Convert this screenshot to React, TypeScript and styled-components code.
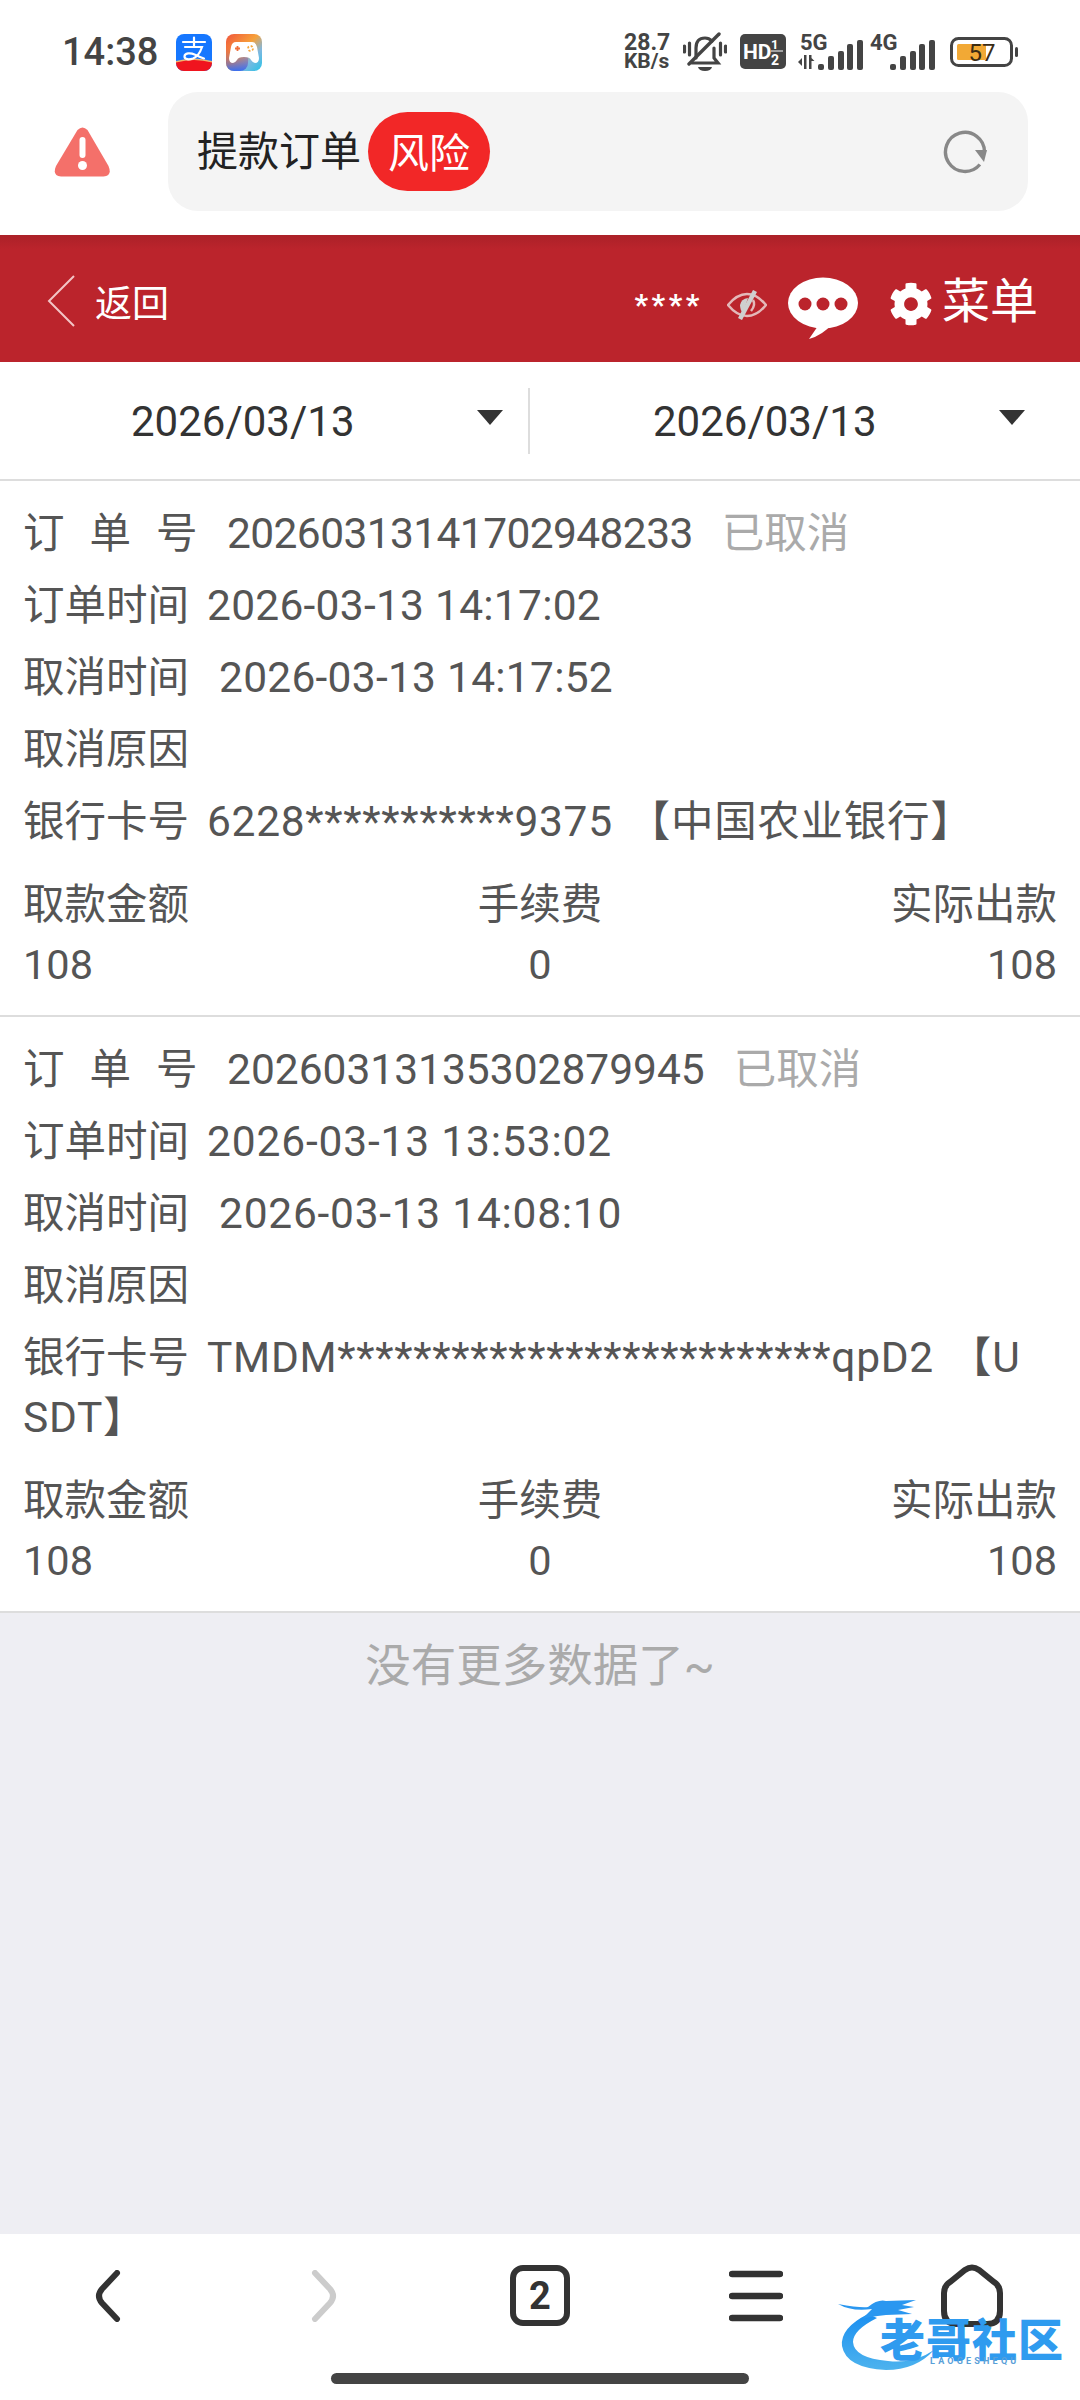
import React from "react";
import styled, { createGlobalStyle } from "styled-components";
import { FaCog } from "react-icons/fa";

const GlobalStyle = createGlobalStyle`
  html, body {
    margin: 0;
    padding: 0;
    background: #fff;
  }
  body {
    font-family: Roboto, "Noto Sans CJK SC", sans-serif;
  }
`;

const Page = styled.div`
  position: relative;
  width: 1080px;
  height: 2400px;
  display: flex;
  flex-direction: column;
  overflow: hidden;
  background: #fff;
`;

/* status bar */
const StatusBar = styled.div`
  height: 92px;
  flex: none;
  display: flex;
  align-items: center;
  padding: 12px 62px 0 62px;
  box-sizing: border-box;
`;

const Clock = styled.span`
  font-size: 38px;
  font-weight: 500;
  color: #444;
  margin-right: 21px;
  width: 93px;
`;

const AppIcons = styled.div`
  display: flex;
  gap: 14px;
`;

const StatusRight = styled.div`
  margin-left: auto;
  display: flex;
  align-items: center;
`;

const NetSpeed = styled.div`
  width: 50px;
  margin-right: 9px;
  font-size: 21px;
  line-height: 19px;
  font-weight: 700;
  color: #444;
  text-align: left;
  white-space: nowrap;
`;

const NetValue = styled.div`
  font-size: 23px;
`;

const StatusIcon = styled.svg<{ $mr?: number }>`
  display: block;
  flex: none;
  margin-right: ${({ $mr }) => $mr ?? 0}px;
`;

/* address bar */
const AddressRow = styled.div`
  height: 143px;
  flex: none;
  display: flex;
  align-items: flex-start;
  box-sizing: border-box;
  padding: 0 52px 0 54px;
`;

const WarnSlot = styled.div`
  width: 114px;
  height: 119px;
  flex: none;
  display: flex;
  align-items: center;
`;

const AddressPill = styled.div`
  flex: 1;
  height: 119px;
  background: #f4f4f4;
  border-radius: 30px;
  display: flex;
  align-items: center;
  padding: 0 41px 0 29px;
`;

const AddressText = styled.span`
  font-size: 41px;
  color: #222;
  margin-right: 7px;
  padding-bottom: 8px;
`;

const RiskBadge = styled.span`
  width: 122px;
  height: 79px;
  box-sizing: border-box;
  padding-bottom: 3px;
  border-radius: 40px;
  background: #f22727;
  color: #fff;
  font-size: 41px;
  display: flex;
  align-items: center;
  justify-content: center;
`;

const RefreshSlot = styled.div`
  margin-left: auto;
  display: flex;
`;

/* red header */
const Header = styled.div`
  height: 127px;
  flex: none;
  box-sizing: border-box;
  padding: 4px 42px 0 47px;
  display: flex;
  align-items: center;
  color: #fff;
  background: linear-gradient(#ab2128 0, #bb242c 14px);
`;

const BackText = styled.span`
  font-size: 37px;
  margin-left: 20px;
`;

const HeaderRight = styled.div`
  margin-left: auto;
  display: flex;
  align-items: center;
`;

const Masked = styled.span`
  font-size: 30px;
  font-weight: 700;
  letter-spacing: 3.5px;
  margin: 8px 24px 0 0;
  line-height: 30px;
`;

const EyeGlyph = styled.svg`
  display: block;
  margin: 8px 21px 0 0;
`;

const BubbleGlyph = styled.svg`
  display: block;
  margin-top: 16px;
`;

const MenuIcon = styled(FaCog)`
  font-size: 44px;
  margin: 7px 9px 0 31px;
`;

const MenuText = styled.span`
  font-size: 48px;
  line-height: 60px;
  margin-top: 2px;
`;

/* date filter */
const DateRow = styled.div`
  height: 119px;
  flex: none;
  display: flex;
  align-items: center;
  border-bottom: 2px solid #ddd;
  box-sizing: border-box;
`;

const DateCell = styled.div<{ $w: number; $pl: number; $pr: number }>`
  width: ${({ $w }) => $w}px;
  box-sizing: border-box;
  padding: 2px ${({ $pr }) => $pr}px 0 ${({ $pl }) => $pl}px;
  display: flex;
  align-items: center;
  justify-content: space-between;
  font-size: 42px;
  color: #333;
`;

const Caret = styled.i`
  display: block;
  width: 0;
  height: 0;
  margin-top: -8px;
  border-left: 13px solid transparent;
  border-right: 13px solid transparent;
  border-top: 15px solid #333;
`;

const DateDivider = styled.div`
  width: 2px;
  height: 66px;
  flex: none;
  background: #ddd;
`;

/* orders */
const OrderCard = styled.div`
  flex: none;
  background: #fff;
  border-bottom: 2px solid #ddd;
  padding: 17px 23px 20px;
  font-size: 41.5px;
  color: #555;
`;

const InfoLine = styled.div`
  line-height: 60px;
  padding: 6px 0;
`;

const SpacedLabel = styled.span`
  display: inline-block;
  width: 204px;
  letter-spacing: 25px;
`;

const InfoValue = styled.span<{ $gap?: number; $track?: number }>`
  margin-left: ${({ $gap }) => $gap ?? 18}px;
  font-size: 42.5px;
  letter-spacing: ${({ $track }) => $track ?? 0}px;
`;

const BankName = styled.span`
  margin-left: 15px;
`;

const StateText = styled.span`
  color: #aaa;
  font-size: 42.5px;
  margin-left: 29px;
`;

const StatsRow = styled.div`
  margin-top: 17px;
  display: flex;
  justify-content: space-between;
`;

const StatCol = styled.div<{ $align: string }>`
  line-height: 60px;
  text-align: ${({ $align }) => $align};
`;

const Rest = styled.div`
  flex: 1;
  background: #eeeef3;
  text-align: center;
  padding-top: 21px;
  font-size: 45.5px;
  line-height: 66px;
  color: #aaa;
`;

/* browser bar */
const BottomBar = styled.div`
  height: 166px;
  flex: none;
  background: #fff;
  display: flex;
  flex-direction: column;
`;

const NavGrid = styled.div`
  display: grid;
  grid-template-columns: repeat(5, 216px);
  padding-top: 30px;
  height: 62px;
`;

const NavItem = styled.div`
  display: flex;
  justify-content: center;
  align-items: center;
`;

const TabCount = styled.div`
  width: 60px;
  height: 61px;
  box-sizing: border-box;
  border: 6px solid #333;
  border-radius: 13px;
  font-size: 38px;
  font-weight: 700;
  color: #333;
  display: flex;
  align-items: center;
  justify-content: center;
`;

const HomeBar = styled.div`
  width: 418px;
  height: 11px;
  border-radius: 6px;
  background: #444;
  margin: 47px auto 0;
`;

/* watermark over the bottom bar */
const Watermark = styled.div`
  position: absolute;
  left: 838px;
  top: 2296px;
  width: 226px;
  height: 80px;
`;

const WatermarkTitle = styled.div`
  position: absolute;
  left: 42px;
  top: 22px;
  font-size: 45px;
  line-height: 48px;
  font-weight: 900;
  white-space: nowrap;
  letter-spacing: 1px;
  color: #2f9bef;
`;

const WatermarkSub = styled.div`
  position: absolute;
  left: 92px;
  top: 60px;
  font-size: 9px;
  font-weight: 700;
  line-height: 10px;
  letter-spacing: 3.2px;
  color: #5aa0d8;
  white-space: nowrap;
`;

const AlipayIcon = () => (
  <svg width="36" height="37" viewBox="0 0 36 37">
    <rect width="36" height="37" rx="8" fill="#1677ff" />
    <path d="M0 28q18-5 36 0v1a8 8 0 0 1 0 0v0a8 8 0 0 1-8 8H8a8 8 0 0 1-8-8z" fill="#f0141e" />
    <path d="M0 27q18-5 36 0v1.500q-18-5-36 0z" fill="#f2b36b" />
    <path d="M18 3.500v8M7 8h22M9 13h17q-3 9-9 11.500c-4 1.500-8.500 1-8.500-2 0-3.500 6-4 10-2 3 1.400 6 3 9.500 4" fill="none" stroke="#fff" strokeWidth="2.200" strokeLinecap="round" />
  </svg>
);

const GameIcon = () => (
  <svg width="36" height="37" viewBox="0 0 36 37">
    <defs>
      <linearGradient id="gameBg" x1="0" y1="0" x2="1" y2="1">
        <stop offset="0" stopColor="#f0553c" />
        <stop offset="0.45" stopColor="#f7a13a" />
        <stop offset="0.7" stopColor="#7fb8e0" />
        <stop offset="1" stopColor="#25c4e8" />
      </linearGradient>
      <linearGradient id="gameBg2" x1="0" y1="0" x2="0" y2="1">
        <stop offset="0.3" stopColor="#f0553c" stopOpacity="0" />
        <stop offset="1" stopColor="#3a6ff0" />
      </linearGradient>
    </defs>
    <rect width="36" height="37" rx="8" fill="url(#gameBg)" />
    <rect width="22" height="37" rx="8" fill="url(#gameBg2)" />
    <path d="M10 8h16q4 0 5 5l2 11q0 5-4 5-2 0-4-3-1-3-7-3t-7 3q-2 3-4 3-4 0-4-5l2-11q1-5 5-5z" fill="#fff" />
    <path d="M11.500 12v5M9 14.500h5" stroke="#f0703c" strokeWidth="1.800" />
    <circle cx="24.500" cy="14.500" r="2.500" fill="none" stroke="#f5a63c" strokeWidth="1.800" strokeDasharray="2 1.900" />
  </svg>
);

const MuteBell = () => (
  <StatusIcon width="44" height="40" viewBox="0 0 44 40" $mr={13}>
    <g fill="none" stroke="#444" strokeLinecap="round" strokeWidth="3.200">
      <path d="M1.500 14v6M6.500 11v12M42.500 14v6M37.500 11v12" />
      <path d="M13 26V16q0-10 9-10 4 0 7 3M31 16v10l4 5H9" />
      <path d="M6 32 36 2" strokeWidth="3.400" />
    </g>
    <path d="M15 35h14q-1 4-7 4t-7-4z" fill="#444" />
  </StatusIcon>
);

const HdBadge = () => (
  <StatusIcon width="46" height="42" viewBox="0 -3 46 42" $mr={12}>
    <rect width="46" height="35" rx="5" fill="#444" />
    <text x="3" y="25" fontSize="21" fontWeight="700" fill="#fff">HD</text>
    <text x="31" y="15" fontSize="13" fontWeight="700" fill="#fff">1</text>
    <path d="M31 17h12" stroke="#fff" strokeWidth="1" />
    <text x="31" y="31" fontSize="14" fontWeight="700" fill="#fff">2</text>
  </StatusIcon>
);

const signalBars = [
  [20, 28, 6, 6],
  [30, 20, 6, 14],
  [40, 15, 6, 19],
  [49, 8, 6, 26],
  [59, 4, 6, 30],
];

const Signal = ({ label, arrows, mr }: { label: string; arrows?: boolean; mr: number }) => (
  <StatusIcon width="66" height="45" viewBox="0 -5 66 45" $mr={mr}>
    <text x={arrows ? 2 : 0} y="15" fontSize="22" fontWeight="700" fill="#444">{label}</text>
    {arrows && <path d="M0 27l4-4v8zM6 20h2.500v14H6zM11 20h2.500v3l3 3h-3v8H11z" fill="#444" />}
    {signalBars.map(([x, y, w, h], i) => (
      <rect key={i} x={x} y={y + 1} width={w} height={h} rx="2" fill="#444" />
    ))}
  </StatusIcon>
);

const Battery = () => (
  <StatusIcon width="68" height="38" viewBox="0 -4 68 38">
    <rect x="1.500" y="1.500" width="60" height="27" rx="7" fill="none" stroke="#444" strokeWidth="3" />
    <rect x="7" y="7" width="29" height="16" rx="1.500" fill="#f2a935" />
    <text x="32" y="24" fontSize="24" fill="#3b2c14" textAnchor="middle">57</text>
    <rect x="65" y="10" width="3" height="10" rx="1.500" fill="#444" />
  </StatusIcon>
);

const WarnIcon = () => (
  <svg width="57" height="50" viewBox="0 0 57 50">
    <path d="M23.500 3q5-5 10 0l21 36q4 10-5 10.500H7q-9-.5-5-10.500z" fill="#f4706a" />
    <rect x="25.500" y="10" width="6" height="21" rx="3" fill="#fff" />
    <circle cx="28.500" cy="38.500" r="4.500" fill="#fff" />
  </svg>
);

const RefreshIcon = () => (
  <svg width="44" height="44" viewBox="0 0 44 44">
    <path d="M41.500 22A19.500 19.500 0 1 0 36.900 34.500" fill="none" stroke="#888" strokeWidth="3.400" />
    <path d="M32 20l12 0-3 12z" fill="#888" />
  </svg>
);

const EyeOff = () => (
  <EyeGlyph width="40" height="30" viewBox="0 0 40 30">
    <path d="M1 15Q10 4 20 4t19 11Q30 26 20 26T1 15z" fill="none" stroke="#e4b8b9" strokeWidth="2.500" />
    <path d="M21 8q-7 1-8 7 0 5 3 8z" fill="#cfcfcf" />
    <path d="M26 10q3 5-2 11" fill="none" stroke="#e4b8b9" strokeWidth="2.500" />
    <path d="M28 1 13 29" stroke="#cfcfcf" strokeWidth="4.500" />
  </EyeGlyph>
);

const ChatBubble = () => (
  <BubbleGlyph width="70" height="63" viewBox="0 0 70 63">
    <ellipse cx="35" cy="26" rx="35" ry="25.500" fill="#fff" />
    <path d="M32 46l-11 16q14-4 24-16z" fill="#fff" />
    <circle cx="17" cy="27" r="6.500" fill="#bb242c" />
    <circle cx="35" cy="27" r="6.500" fill="#bb242c" />
    <circle cx="53" cy="27" r="6.500" fill="#bb242c" />
  </BubbleGlyph>
);

const BackChevron = () => (
  <svg width="28" height="52" viewBox="0 0 28 52">
    <path d="M27 1 2 26l25 25" fill="none" stroke="#f3c5c6" strokeWidth="2" />
  </svg>
);

const NavChevron = ({ color, flip }: { color: string; flip?: boolean }) => (
  <svg width="26" height="52" viewBox="0 0 26 52" style={flip ? { transform: "scaleX(-1)" } : undefined}>
    <path d="M22 3 7 19q-6 7 0 14l15 16" fill="none" stroke={color} strokeWidth="6" strokeLinecap="round" />
  </svg>
);

const Hamburger = () => (
  <svg width="54" height="52" viewBox="0 0 54 52">
    <path d="M3 4h48M3 26h48M3 48h48" stroke="#333" strokeWidth="6.500" strokeLinecap="round" />
  </svg>
);

const HomeIcon = () => (
  <svg width="62" height="63" viewBox="0 0 62 63">
    <path d="M24 6q7-5 14 0l15 12q6 4 6 11v18q0 13-13 13H16Q3 60 3 47V29q0-7 6-11z" fill="none" stroke="#333" strokeWidth="6" />
  </svg>
);

const DragonMark = () => (
  <svg width="226" height="80" viewBox="0 0 226 80">
    <defs>
      <linearGradient id="drag" x1="0" y1="0" x2="0" y2="1">
        <stop offset="0" stopColor="#1b8ff0" />
        <stop offset="1" stopColor="#4db3ee" />
      </linearGradient>
    </defs>
    <path d="M30 18Q2 32 4 50q4 22 44 24 30 0 48-20-20 14-46 11Q16 62 15 46q0-12 24-24z" fill="url(#drag)" />
    <path d="M0 8q22 4 30 3 10-8 18-6l30-1-14 5 12 2-16 3 14 4-26 1q-18 2-24 4l10-10Q14 16 0 8z" fill="#2a97f0" />
  </svg>
);

const orders = [
  {
    id: "20260313141702948233",
    idTrack: -0.6,
    createdAt: "2026-03-13 14:17:02",
    createdTrack: 0.26,
    cancelledAt: "2026-03-13 14:17:52",
    cancelledTrack: 0.26,
    card: (
      <>6228***********9375<BankName>【中国农业银行】</BankName></>
    ),
  },
  {
    id: "20260313135302879945",
    idTrack: 0,
    createdAt: "2026-03-13 13:53:02",
    createdTrack: 0.84,
    cancelledAt: "2026-03-13 14:08:10",
    cancelledTrack: 0.74,
    card: (
      <>TMDM**************************qpD2<BankName>【U</BankName><br />SDT】</>
    ),
  },
];

export default function App() {
  return (
    <Page>
      <GlobalStyle />
      <StatusBar>
        <Clock>14:38</Clock>
        <AppIcons>
          <AlipayIcon />
          <GameIcon />
        </AppIcons>
        <StatusRight>
          <NetSpeed>
            <NetValue>28.7</NetValue>
            KB/s
          </NetSpeed>
          <MuteBell />
          <HdBadge />
          <Signal label="5G" arrows mr={6} />
          <Signal label="4G" mr={14} />
          <Battery />
        </StatusRight>
      </StatusBar>

      <AddressRow>
        <WarnSlot>
          <WarnIcon />
        </WarnSlot>
        <AddressPill>
          <AddressText>提款订单</AddressText>
          <RiskBadge>风险</RiskBadge>
          <RefreshSlot>
            <RefreshIcon />
          </RefreshSlot>
        </AddressPill>
      </AddressRow>

      <Header>
        <BackChevron />
        <BackText>返回</BackText>
        <HeaderRight>
          <Masked>****</Masked>
          <EyeOff />
          <ChatBubble />
          <MenuIcon />
          <MenuText>菜单</MenuText>
        </HeaderRight>
      </Header>

      <DateRow>
        <DateCell $w={528} $pl={131} $pr={25}>
          2026/03/13
          <Caret />
        </DateCell>
        <DateDivider />
        <DateCell $w={550} $pl={123} $pr={55}>
          2026/03/13
          <Caret />
        </DateCell>
      </DateRow>

      {orders.map((order) => (
        <OrderCard key={order.id}>
          <InfoLine>
            <SpacedLabel>订单号</SpacedLabel>
            <InfoValue $gap={0} $track={order.idTrack}>{order.id}</InfoValue>
            <StateText>已取消</StateText>
          </InfoLine>
          <InfoLine>
            订单时间<InfoValue $track={order.createdTrack}>{order.createdAt}</InfoValue>
          </InfoLine>
          <InfoLine>
            取消时间<InfoValue $gap={30} $track={order.cancelledTrack}>{order.cancelledAt}</InfoValue>
          </InfoLine>
          <InfoLine>取消原因</InfoLine>
          <InfoLine>
            银行卡号<InfoValue $track={0.7}>{order.card}</InfoValue>
          </InfoLine>
          <StatsRow>
            <StatCol $align="left">
              取款金额
              <br />
              108
            </StatCol>
            <StatCol $align="center">
              手续费
              <br />0
            </StatCol>
            <StatCol $align="right">
              实际出款
              <br />
              108
            </StatCol>
          </StatsRow>
        </OrderCard>
      ))}

      <Rest>没有更多数据了~</Rest>

      <BottomBar>
        <NavGrid>
          <NavItem>
            <NavChevron color="#333" />
          </NavItem>
          <NavItem>
            <NavChevron color="#ccc" flip />
          </NavItem>
          <NavItem>
            <TabCount>2</TabCount>
          </NavItem>
          <NavItem>
            <Hamburger />
          </NavItem>
          <NavItem>
            <HomeIcon />
          </NavItem>
        </NavGrid>
        <HomeBar />
      </BottomBar>

      <Watermark>
        <DragonMark />
        <WatermarkTitle>老哥社区</WatermarkTitle>
        <WatermarkSub>LAOGESHEQU</WatermarkSub>
      </Watermark>
    </Page>
  );
}
